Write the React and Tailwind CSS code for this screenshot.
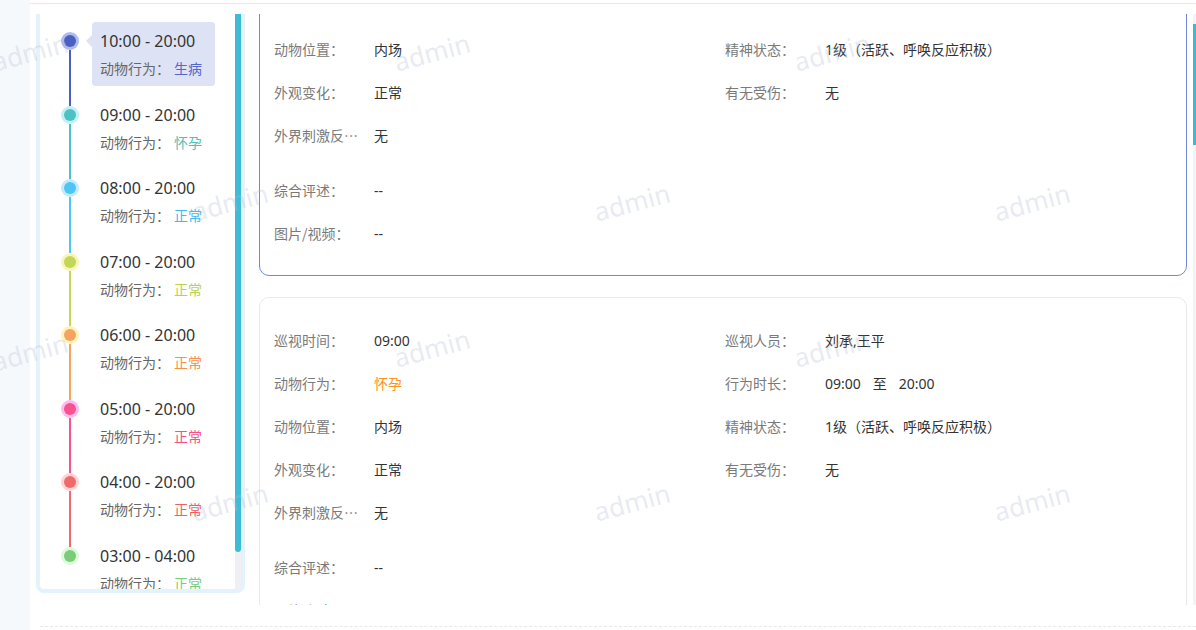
import React from "react";

const items = [
  { time: "10:00 - 20:00", status: "生病", dot: "bg-[#4b5fc1]", halo: "bg-[#aebbee]", line: "bg-[#4b5fc1]", text: "text-[#5466cb]", active: true },
  { time: "09:00 - 20:00", status: "怀孕", dot: "bg-[#4ec2c2]", halo: "bg-[#c2f0f6]", line: "bg-[#4ec2c2]", text: "text-[#4fc1b9]" },
  { time: "08:00 - 20:00", status: "正常", dot: "bg-[#4fc4f7]", halo: "bg-[#c2ecfc]", line: "bg-[#4fc4f7]", text: "text-[#44b6f0]" },
  { time: "07:00 - 20:00", status: "正常", dot: "bg-[#c2d658]", halo: "bg-[#fbf4b8]", line: "bg-[#c2d658]", text: "text-[#bcd04c]" },
  { time: "06:00 - 20:00", status: "正常", dot: "bg-[#f5a35f]", halo: "bg-[#fff3b8]", line: "bg-[#f5a35f]", text: "text-[#f4914a]" },
  { time: "05:00 - 20:00", status: "正常", dot: "bg-[#f9528e]", halo: "bg-[#ffbcf0]", line: "bg-[#f9528e]", text: "text-[#f74f87]" },
  { time: "04:00 - 20:00", status: "正常", dot: "bg-[#ef6b6b]", halo: "bg-[#ffd4d4]", line: "bg-[#ef6b6b]", text: "text-[#ee5f5f]" },
  { time: "03:00 - 04:00", status: "正常", dot: "bg-[#7bcb7b]", halo: "bg-[#d9fbd9]", line: "", text: "text-[#7bcb7b]" },
];

const marks = [
  "left-[30px] top-[52px]",
  "left-[432px] top-[52px]",
  "left-[832px] top-[52px]",
  "left-[230px] top-[202px]",
  "left-[632px] top-[202px]",
  "left-[1032px] top-[202px]",
  "left-[30px] top-[352px]",
  "left-[432px] top-[348px]",
  "left-[832px] top-[348px]",
  "left-[230px] top-[502px]",
  "left-[632px] top-[502px]",
  "left-[1032px] top-[502px]",
];

const TimelineItem = ({ item, last }) => (
  <div className="flex h-[73.57px] pl-[21px]">
    <div className="flex w-[18px] flex-col items-center pt-[10px]">
      <div className={`flex h-[18px] w-[18px] shrink-0 items-center justify-center rounded-full ${item.halo}`}>
        <div className={`h-[12px] w-[12px] rounded-full ${item.dot}`} />
      </div>
      {!last && <div className={`-mb-[10px] w-[2px] flex-1 ${item.line}`} />}
    </div>
    <div
      className={`relative ml-[13px] h-[64px] w-[123px] rounded px-2 pt-[7px] ${
        item.active ? "bg-[#dde3f5]" : ""
      }`}
    >
      {item.active && (
        <span className="absolute -left-[6px] top-[13px] h-0 w-0 border-y-[6px] border-r-[6px] border-y-transparent border-r-[#dde3f5]" />
      )}
      <div className="text-[16px] leading-6 text-[#333]">{item.time}</div>
      <div className="mt-[6px] whitespace-nowrap text-[14px] leading-5 text-[#666]">
        动物行为：<span className={`ml-1 ${item.text}`}>{item.status}</span>
      </div>
    </div>
  </div>
);

const Field = ({ label, children }) => (
  <div className="flex h-[43px] items-center text-[14px]">
    <span className="mr-[12px] w-[88px] truncate font-['Noto_Sans_CJK_SC','Noto_Sans',sans-serif] text-[#7a7a7a]">
      {label}
    </span>
    <span className="text-[#333]">{children}</span>
  </div>
);

const Card = ({ active, time, behavior, behaviorClass }) => (
  <div
    className={`rounded-[10px] border px-[14px] pt-[21px] pb-[20px] ${
      active ? "border-[#6f88da]" : "border-[#e9e9e9]"
    }`}
  >
    <div className="grid grid-cols-[451px_1fr]">
      <Field label="巡视时间：">{time}</Field>
      <Field label="巡视人员：">刘承,王平</Field>
      <Field label="动物行为：">
        <span className={behaviorClass}>{behavior}</span>
      </Field>
      <Field label="行为时长：">
        {time}
        <span className="ml-3">至</span>
        <span className="ml-3">20:00</span>
      </Field>
      <Field label="动物位置：">内场</Field>
      <Field label="精神状态：">1级（活跃、呼唤反应积极）</Field>
      <Field label="外观变化：">正常</Field>
      <Field label="有无受伤：">无</Field>
      <Field label="外界刺激反应：">无</Field>
      <div />
    </div>
    <div className="mt-[12px]">
      <Field label="综合评述：">--</Field>
      <Field label="图片/视频：">--</Field>
    </div>
  </div>
);

export default function App() {
  return (
    <div className="relative flex h-[630px] w-[1196px] overflow-hidden bg-white font-['Noto_Sans','Noto_Sans_CJK_SC',sans-serif]">
      <div className="w-[30px] shrink-0 bg-[#f6f9fc]" />
      <div className="flex flex-1 flex-col">
        <div className="h-[4px] border-b border-[#e8e8e8]" />
        <div className="h-[10px]" />
        <div className="flex h-[591px]">
          {/* timeline */}
          <div className="ml-[6px] flex h-[579px] w-[209px] shrink-0 rounded-b-lg border-x-4 border-b-4 border-[#e3f2fb] bg-white">
            <div className="flex-1 overflow-hidden pt-[8px]">
              {items.map((it, i) => (
                <TimelineItem key={i} item={it} last={i === items.length - 1} />
              ))}
            </div>
            <div className="flex w-[6px] flex-col bg-[#eef0f3]">
              <div className="h-[538px] rounded-b bg-[#3ebcd6]" />
            </div>
          </div>

          {/* record cards */}
          <div className="ml-[14px] h-full w-[928px] shrink-0 overflow-hidden">
            <div className="-mt-[94px] flex flex-col gap-[21px]">
              <Card active time="10:00" behavior="生病" behaviorClass="text-[#5466cb]" />
              <Card time="09:00" behavior="怀孕" behaviorClass="text-[#f7931e]" />
            </div>
          </div>

          <div className="ml-[6px] flex h-full w-[3px] flex-col bg-[#f4f4f4]">
            <div className="mt-[10px] h-[121px] bg-[#40b8d0]" />
          </div>
        </div>
        <div className="h-[21px]" />
        <div className="ml-[10px] border-t border-dashed border-[#e8e8e8]" />
      </div>

      {/* watermark */}
      <div className="pointer-events-none absolute inset-0">
        {marks.map((m, i) => (
          <span
            key={i}
            className={`absolute ${m} -translate-x-1/2 -translate-y-1/2 rotate-[-15deg] text-[26px] leading-none text-[rgba(175,185,212,0.3)]`}
          >
            admin
          </span>
        ))}
      </div>
    </div>
  );
}
